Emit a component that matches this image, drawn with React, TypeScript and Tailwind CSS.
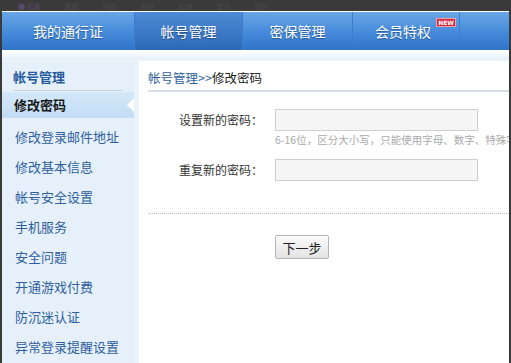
import React from "react";

const items = [
  "修改登录邮件地址",
  "修改基本信息",
  "帐号安全设置",
  "手机服务",
  "安全问题",
  "开通游戏付费",
  "防沉迷认证",
  "异常登录提醒设置",
];

export default function App() {
  const font = { fontFamily: '"Noto Sans CJK SC", "Liberation Sans", sans-serif' };
  return (
    <div className="w-[511px] h-[363px] overflow-hidden bg-[#3a3a3a] flex flex-col" style={font}>
      {/* top dark strip */}
      <div className="h-[11px] flex items-center gap-6 pl-[18px] text-[7px] leading-[8px] text-[#4a4a4a] overflow-hidden">
        <span className="text-[#5a4a6a]">● 百度</span>
        <span>新闻</span><span>网页</span><span>贴吧</span><span>知道</span><span>音乐</span><span>图片</span>
      </div>
      <div className="flex-1 flex flex-col bg-white ml-[2px] mr-[2px] border-t border-white">
        {/* nav */}
        <div className="h-[38px] flex bg-gradient-to-b from-[#6aa6e6] via-[#478cdb] to-[#2f74c9] text-white text-[14px]">
          <div className="w-[133px] flex items-center justify-center border-r border-[#3b7ccc] [text-shadow:0_1px_1px_rgba(0,0,0,0.35)]">我的通行证</div>
          <div className="w-[108px] flex items-center justify-center bg-gradient-to-b from-[#4d8bd6] to-[#2e69b8] border-r border-[#3b7ccc] [text-shadow:0_1px_1px_rgba(0,0,0,0.35)]">帐号管理</div>
          <div className="w-[110px] flex items-center justify-center border-r border-[#3b7ccc] [text-shadow:0_1px_1px_rgba(0,0,0,0.35)]">密保管理</div>
          <div className="w-[107px] flex items-center justify-center border-r border-[#3b7ccc] [text-shadow:0_1px_1px_rgba(0,0,0,0.35)] relative">
            <span className="pr-[6px]">会员特权</span>
            <span className="absolute top-[6px] right-[3px] bg-[#d2283c] text-white text-[6px] font-bold leading-[7px] px-[1px] border border-[#f2a0a8] [text-shadow:none]" style={{ fontFamily: '"DejaVu Sans", sans-serif' }}>NEW</span>
          </div>
          <div className="flex-1" />
        </div>
        <div className="h-[11px] bg-gradient-to-b from-[#ffffff] to-[#e4eef8] border-b border-[#f0f5fa]" />
        {/* body */}
        <div className="flex-1 flex">
          {/* sidebar */}
          <div className="w-[132px] bg-[#e6f0fa] pt-[6px] flex flex-col">
            <div className="mx-[11px] pb-[3px] border-b border-[#c9ced4] text-[13px] font-bold text-[#255a9e] leading-[20px]">帐号管理</div>
            <div className="relative mt-[1px] h-[26px] bg-gradient-to-b from-[#d4e8f9] to-[#c2dcf4] flex items-center pl-[12px] text-[13px] font-bold text-[#1a1a1a]">
              修改密码
              <span className="absolute right-0 top-[6px] w-0 h-0 border-t-[7px] border-b-[7px] border-r-[7px] border-t-transparent border-b-transparent border-r-white" />
            </div>
            <div className="pt-[1px] flex flex-col">
              {items.map((t) => (
                <div key={t} className="h-[30px] flex items-center pl-[13px] text-[13px] text-[#2f5f9e] pt-[6px]">{t}</div>
              ))}
            </div>
          </div>
          <div className="w-[5px] bg-[#eaf2fa]" />
          {/* content */}
          <div className="flex-1 pl-[9px] pt-[8px] overflow-hidden">
            <div className="h-[23px] border-b-2 border-[#d6dfe9] text-[12.5px] leading-[18px] whitespace-nowrap">
              <span className="text-[#2f5f9e]">帐号管理</span>
              <span className="text-[#2f5f9e]">&gt;&gt;</span>
              <span className="text-[#222]">修改密码</span>
            </div>
            <div className="pt-[17px] text-[12px] text-[#333]">
              <div className="flex items-center">
                <div className="w-[127px] text-right pr-[12px]">设置新的密码：</div>
                <div className="w-[203px] h-[22px] border border-[#cfcfcf] bg-[#f5f5f5] shrink-0" />
              </div>
              <div className="pl-[127px] mt-[1px] text-[10.5px] text-[#aaa] whitespace-nowrap">6-16位，区分大小写，只能使用字母、数字、特殊字符</div>
              <div className="flex items-center mt-[11px]">
                <div className="w-[127px] text-right pr-[12px]">重复新的密码：</div>
                <div className="w-[203px] h-[22px] border border-[#cfcfcf] bg-[#f5f5f5] shrink-0" />
              </div>
            </div>
            <div className="mt-[32px] border-t border-dotted border-[#bbb]" />
            <div className="pl-[127px] mt-[20px]">
              <button className="w-[54px] h-[24px] border border-[#b5b5b5] rounded-[2px] bg-gradient-to-b from-[#fbfbfb] to-[#e3e3e3] text-[13px] text-[#222] leading-none">下一步</button>
            </div>
          </div>
        </div>
      </div>
    </div>
  );
}
